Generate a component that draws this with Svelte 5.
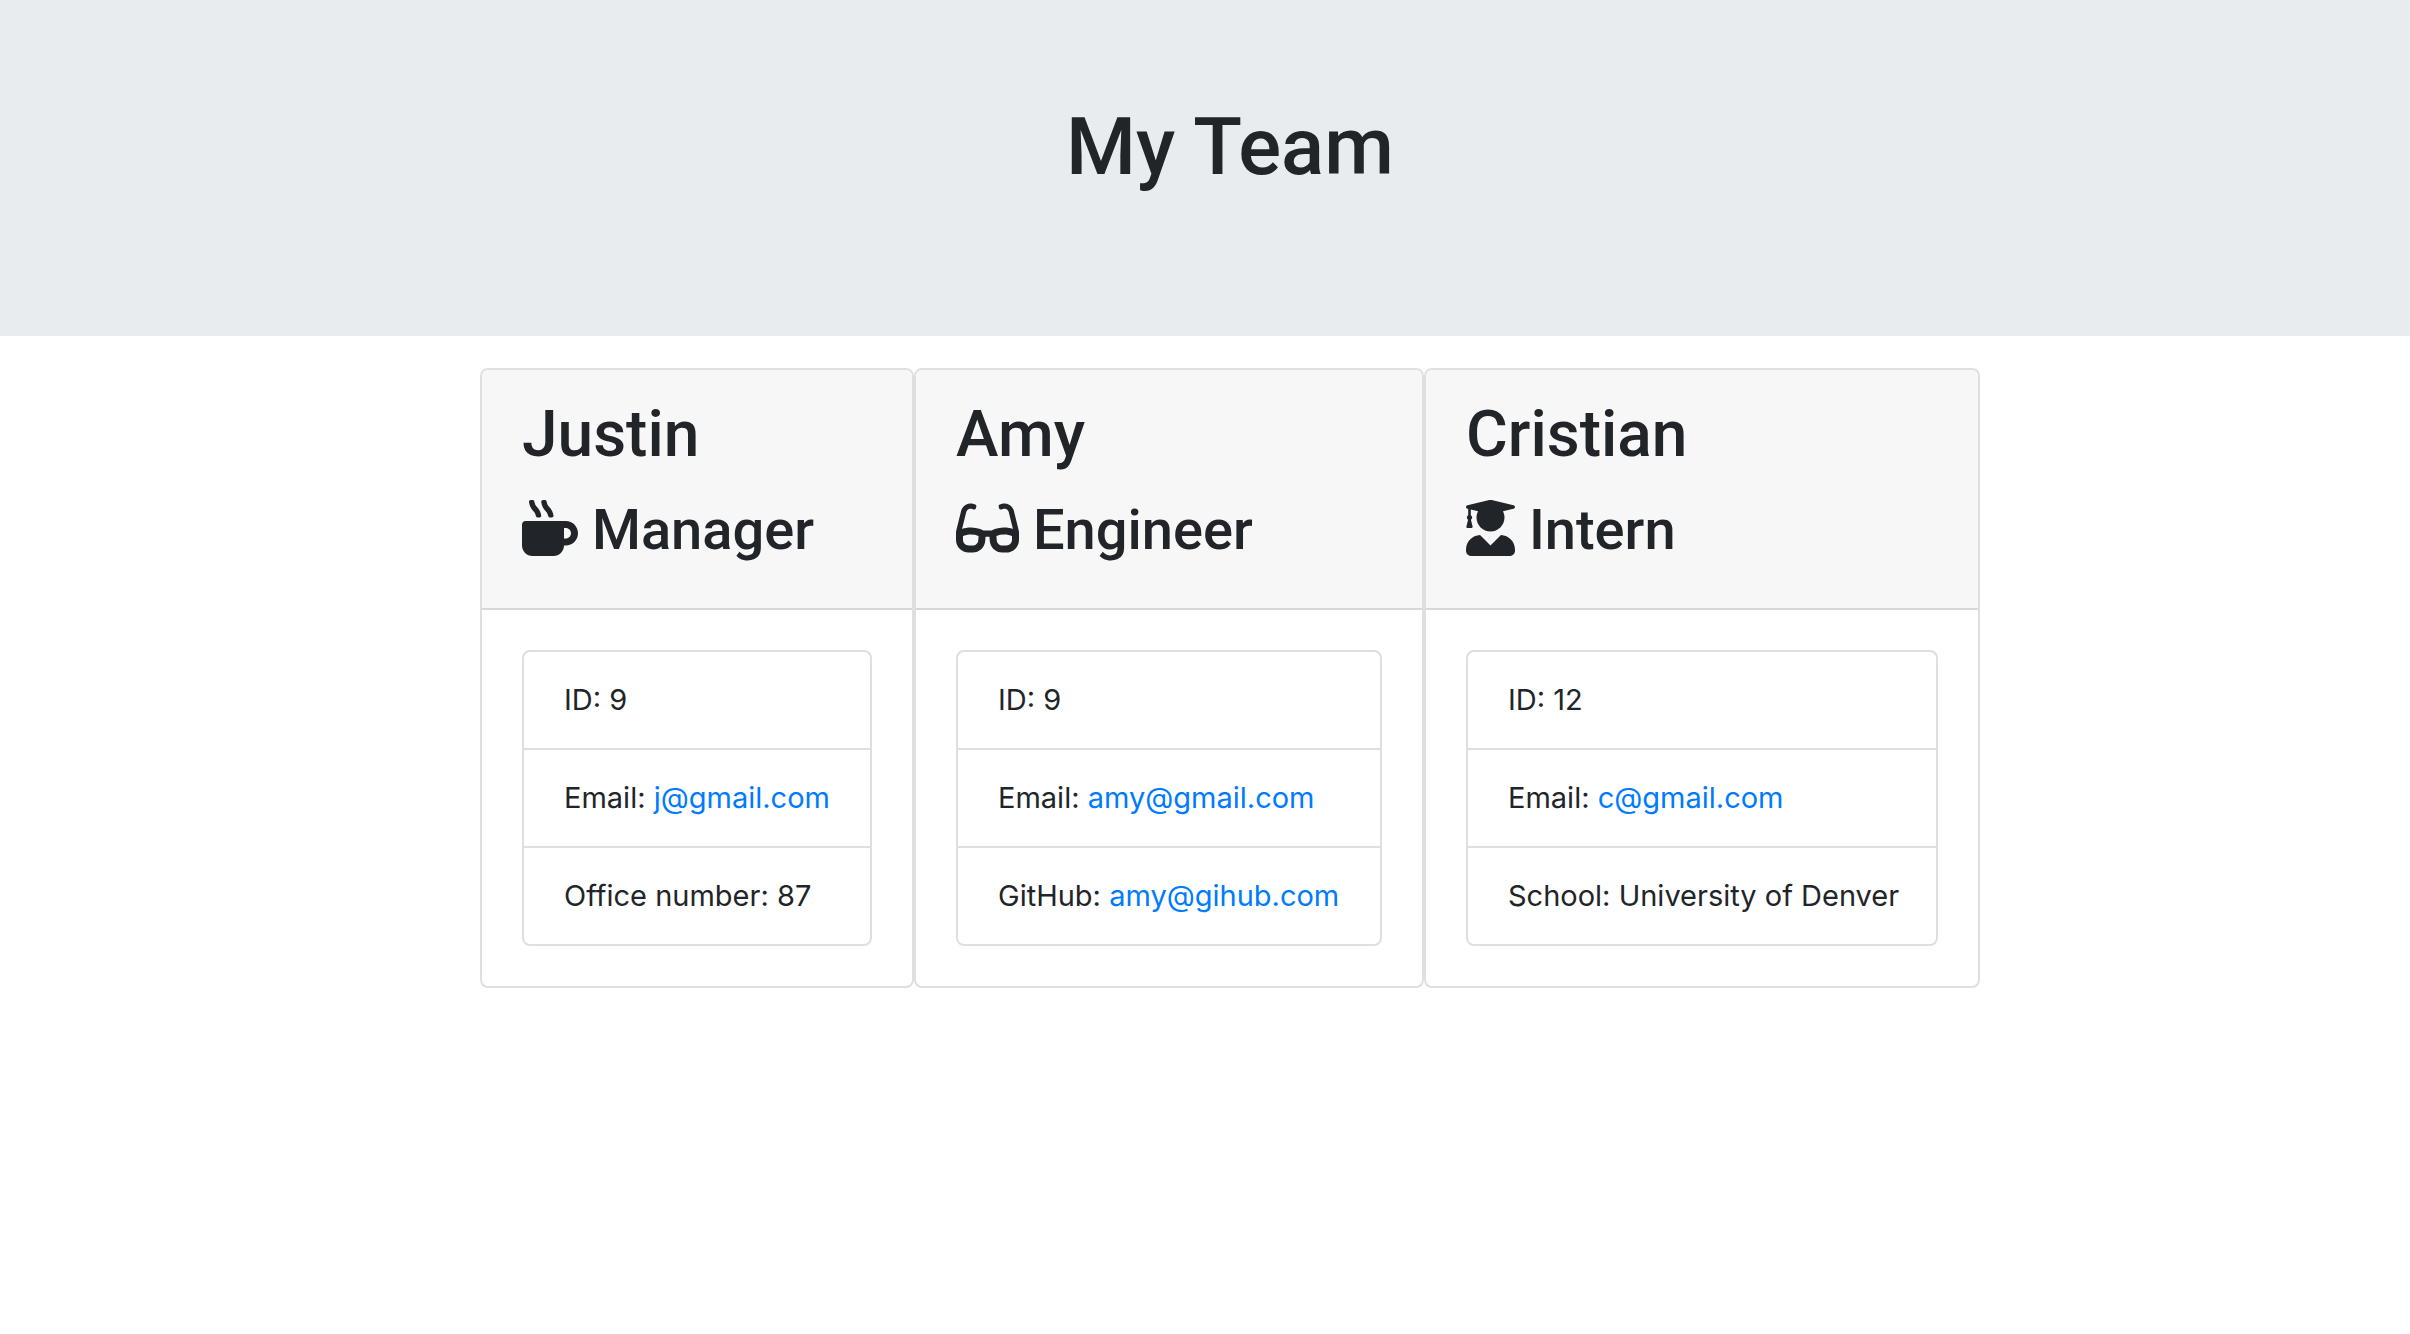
<script>
  const icons = {
    mug: {
      width: 512,
      path: 'M127.1 146.5c1.3 7.7 8 13.5 16 13.5h16.5c9.8 0 17.6-8.5 16.3-18-3.8-28.2-16.4-54.2-36.6-74.7-14.4-14.7-23.6-33.3-26.4-53.5C111.8 5.9 105 0 96.8 0H80.4C70.6 0 63 8.5 64.1 18c3.9 31.9 18 61.3 40.6 84.4 12 12.2 19.7 27.5 22.4 44.1zm112 0c1.3 7.7 8 13.5 16 13.5h16.5c9.8 0 17.6-8.5 16.3-18-3.8-28.2-16.4-54.2-36.6-74.7-14.4-14.7-23.6-33.3-26.4-53.5C223.8 5.9 217 0 208.8 0h-16.4c-9.8 0-17.5 8.5-16.3 18 3.9 31.9 18 61.3 40.6 84.4 12 12.2 19.7 27.5 22.4 44.1zM400 192H32c-17.7 0-32 14.3-32 32v192c0 53 43 96 96 96h192c53 0 96-43 96-96h16c61.8 0 112-50.2 112-112s-50.2-112-112-112zm0 160h-16v-96h16c26.5 0 48 21.5 48 48s-21.5 48-48 48z',
    },
    glasses: {
      width: 576,
      path: 'M574.1 280.37L528.75 98.66c-5.91-23.7-21.59-44.05-43-55.81-21.44-11.73-46.97-14.11-70.19-6.33l-15.25 5.08c-8.39 2.79-12.92 11.86-10.12 20.24l5.06 15.18c2.79 8.38 11.85 12.91 20.23 10.12l13.18-4.39c10.87-3.62 23-3.57 33.16 1.73 10.29 5.37 17.57 14.56 20.37 25.82l38.46 153.82c-22.19-6.81-49.79-12.46-81.2-12.46-34.77 0-73.98 7.02-114.85 26.74h-73.18c-40.87-19.74-80.08-26.75-114.86-26.75-31.42 0-59.02 5.65-81.21 12.46l38.46-153.83c2.79-11.25 10.09-20.45 20.38-25.81 10.16-5.3 22.28-5.35 33.15-1.73l13.17 4.39c8.38 2.79 17.44-1.74 20.23-10.12l5.06-15.18c2.8-8.38-1.73-17.45-10.12-20.24l-15.25-5.08c-23.22-7.78-48.75-5.41-70.19 6.33-21.41 11.77-37.09 32.11-43 55.8L1.9 280.37A64.218 64.218 0 0 0 0 295.86v70.25C0 429.01 51.58 480 115.2 480h37.12c60.28 0 110.37-45.94 114.88-105.37l2.93-38.63h35.75l2.93 38.63C313.31 434.06 363.4 480 423.68 480h37.12c63.62 0 115.2-50.99 115.2-113.88v-70.25c0-5.23-.64-10.43-1.9-15.5zm-370.72 89.42c-1.97 25.91-24.4 46.21-51.06 46.21H115.2C86.97 416 64 393.62 64 366.11v-37.54c18.12-6.49 43.42-12.92 72.58-12.92 23.86 0 47.26 4.33 69.93 12.92l-3.13 41.22zM512 366.12c0 27.51-22.97 49.88-51.2 49.88h-37.12c-26.67 0-49.1-20.3-51.06-46.21l-3.13-41.22c22.67-8.59 46.08-12.92 69.95-12.92 29.12 0 54.43 6.44 72.55 12.93v37.54z',
    },
    graduate: {
      width: 448,
      path: 'M319.4 320.6L224 416l-95.4-95.4C57.1 323.7 0 382.2 0 454.4v9.6c0 26.5 21.5 48 48 48h352c26.5 0 48-21.5 48-48v-9.6c0-72.2-57.1-130.7-128.6-133.8zM13.6 79.8l6.4 1.5v58.4c-7 4.2-12 11.5-12 20.3 0 8.4 4.6 15.4 11.1 19.7L3.5 242c-1.7 6.9 2.1 14 7.6 14h41.8c5.5 0 9.3-7.1 7.6-14l-15.6-62.3C51.4 175.4 56 168.4 56 160c0-8.8-5-16.1-12-20.3V87.1l66 15.9c-8.6 17.2-14 36.4-14 57 0 70.7 57.3 128 128 128s128-57.3 128-128c0-20.6-5.3-39.8-14-57l96.3-23.2c18.2-4.4 18.2-27.1 0-31.5l-190.4-46c-13-3.1-26.7-3.1-39.7 0L13.6 48.2c-18.1 4.4-18.1 27.2 0 31.6z',
    },
  };

  const team = [
    {
      name: 'Justin',
      role: 'Manager',
      icon: icons.mug,
      rows: [
        { label: 'ID', value: '9' },
        { label: 'Email', value: 'j@gmail.com', href: 'mailto:j@gmail.com' },
        { label: 'Office number', value: '87' },
      ],
    },
    {
      name: 'Amy',
      role: 'Engineer',
      icon: icons.glasses,
      rows: [
        { label: 'ID', value: '9' },
        { label: 'Email', value: 'amy@gmail.com', href: 'mailto:amy@gmail.com' },
        { label: 'GitHub', value: 'amy@gihub.com', href: 'https://github.com/amy@gihub.com' },
      ],
    },
    {
      name: 'Cristian',
      role: 'Intern',
      icon: icons.graduate,
      rows: [
        { label: 'ID', value: '12' },
        { label: 'Email', value: 'c@gmail.com', href: 'mailto:c@gmail.com' },
        { label: 'School', value: 'University of Denver' },
      ],
    },
  ];
</script>

<header class="hero">
  <h1>My Team</h1>
</header>

<main>
  <div class="team">
    {#each team as member}
      <article class="card">
        <div class="card-header">
          <h2>{member.name}</h2>
          <h3>
            <svg viewBox="0 0 {member.icon.width} 512" aria-hidden="true"><path d={member.icon.path} /></svg>
            {member.role}
          </h3>
        </div>
        <div class="card-body">
          <ul>
            {#each member.rows as row}
              <li>
                {row.label}: {#if row.href}<a href={row.href}>{row.value}</a>{:else}{row.value}{/if}
              </li>
            {/each}
          </ul>
        </div>
      </article>
    {/each}
  </div>
</main>

<style>
  :global(body) {
    margin: 0;
    background: #fff;
    color: #212529;
    font-family: Inter, 'Liberation Sans', sans-serif;
    font-size: 29px;
    line-height: 48px;
  }

  .hero {
    padding: 99px 0 125px 50px;
    background: #e8ecef;
    text-align: center;
  }

  h1,
  h2,
  h3 {
    margin: 0 0 16px;
    font-family: Roboto, 'Liberation Sans', sans-serif;
    font-weight: 500;
  }

  h1 {
    font-size: 80px;
    line-height: 96px;
  }

  h2 {
    font-size: 64px;
    line-height: 78px;
  }

  h3 {
    font-size: 56px;
    line-height: 80px;
  }

  main {
    padding: 32px 0 32px 50px;
  }

  .team {
    display: grid;
    grid-template-columns: 434fr 510fr 556fr;
    max-width: 1500px;
    margin: 0 auto;
  }

  .card {
    border: 2px solid #dfdfdf;
    border-radius: 8px;
    overflow: hidden;
  }

  .card-header {
    padding: 26px 40px 22px;
    background: #f7f7f7;
    border-bottom: 2px solid #d8d8d8;
  }

  .card-header h2,
  .card-header h3 {
    white-space: nowrap;
  }

  svg {
    height: 56px;
    vertical-align: -7px;
    fill: currentColor;
  }

  .card-body {
    padding: 40px;
  }

  ul {
    margin: 0;
    padding: 0;
    list-style: none;
    border: 2px solid #dfdfdf;
    border-radius: 8px;
  }

  li {
    padding: 24px 0 24px 40px;
    white-space: nowrap;
  }

  li + li {
    border-top: 2px solid #dfdfdf;
  }

  a {
    color: #007bff;
    text-decoration: none;
  }
</style>
